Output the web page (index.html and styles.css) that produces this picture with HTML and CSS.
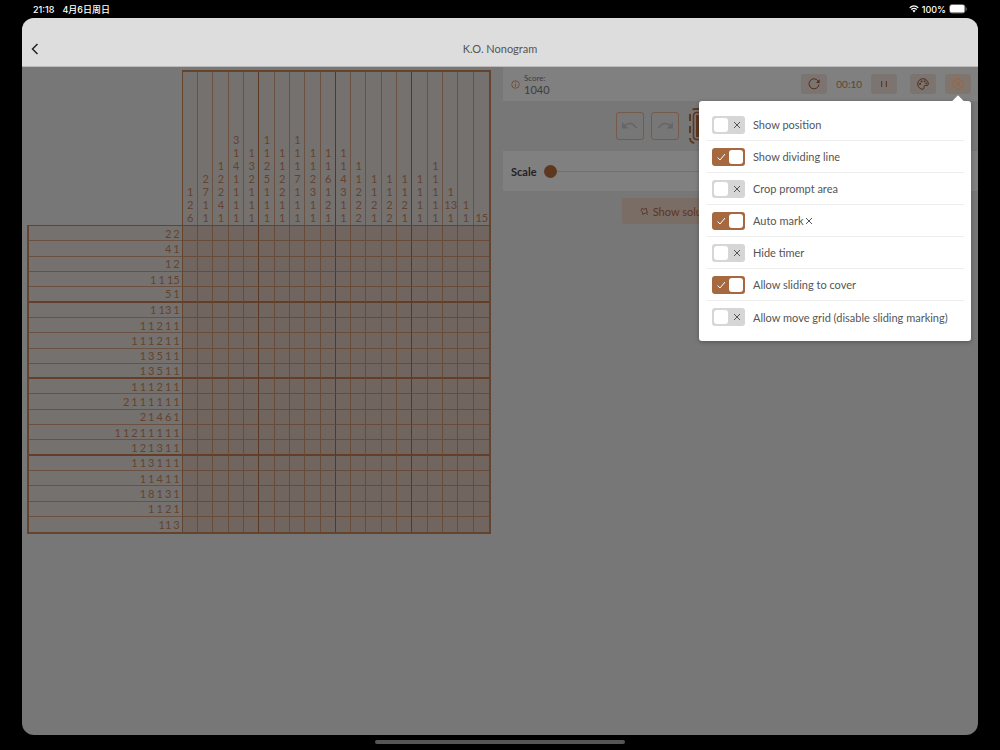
FILE: index.html
```html
<!DOCTYPE html>
<html lang="en">
	<head>
		<meta charset="UTF-8" />
		<meta name="viewport" content="width=device-width, initial-scale=1.0" />
		<title>K.O. Nonogram</title>
		<link rel="stylesheet" href="styles.css">
	</head>
	<body>
		<svg class="symbols" aria-hidden="true">
			<symbol id="check" viewBox="0 0 10 10"><path d="M1.5 5.5 4 8l5-6" /></symbol>
			<symbol id="cross" viewBox="0 0 10 10"><path d="m2 2 6 6M8 2 2 8" /></symbol>
		</svg>

		<div class="status">
			<span>21:18</span>
			<span class="date" lang="zh">4月6日周日</span>
			<span class="status-right">
				<svg class="wifi" viewBox="0 0 20 16"><path d="M1.500 5.500Q10-2 18.500 5.500M4.500 9Q10 4.200 15.500 9" /><path class="dot" d="M6.800 11.300Q10 8.600 13.200 11.300L10 15z" /></svg>
				<span>100%</span>
				<svg class="battery" viewBox="0 0 18 10"><rect x=".5" y=".5" width="15.500" height="8.500" rx="2.500" /><rect class="charge" x="1" y="1" width="14.500" height="7.500" rx="1.500" /><path d="M17.300 3.500v3" /></svg>
			</span>
		</div>

		<div class="window">
			<header class="titlebar">
				<button class="back" type="button" aria-label="Back">
					<svg viewBox="0 0 12 12"><path d="M8.500 1 3.500 6l5 5" /></svg>
				</button>
				<h1>K.O. Nonogram</h1>
			</header>

			<main class="game">
				<section class="board" aria-label="Puzzle">
					<div class="col-clues" id="colClues"></div>
					<div class="row-clues" id="rowClues"></div>
					<div class="cells" id="cells"></div>
				</section>

				<section class="panel">
					<div class="card info">
						<svg class="icon-info" viewBox="0 0 10 10"><circle cx="5" cy="5" r="4.200" /><path d="M5 4.500v3M5 2.500v1" /></svg>
						<div class="score">
							<span class="score-label">Score:</span>
							<span class="score-value">1040</span>
						</div>
						<div class="controls">
							<button class="chip" type="button" aria-label="Restart">
								<svg viewBox="0 0 14 14"><path d="M11.300 4.200A5 5 0 1 0 12 7.500" /><path class="fill" d="M12.600 2.300v3.700H9z" /></svg>
							</button>
							<span class="timer">00:10</span>
							<button class="chip pause" type="button" aria-label="Pause">
								<svg viewBox="0 0 14 14"><path d="M4.700 4v6M9.300 4v6" /></svg>
							</button>
							<button class="chip" type="button" aria-label="Theme">
								<svg viewBox="0 0 14 14"><path d="M7 12.300A5.300 5.300 0 1 1 12.300 7C12.300 9 10.500 8.500 9 8.500 6.800 8.500 9 12.200 7 12.300z" /><path class="fill" d="M3.200 6h1.800v1.800H3.200zM4.600 3.500h1.800v1.800H4.600zM7.800 3.500h1.800v1.800H7.800zM9.500 5.800h1.500v1.500H9.500z" /></svg>
							</button>
							<div class="settings">
								<button class="chip active" type="button" aria-label="Settings" aria-expanded="true">
									<svg viewBox="0 0 14 14"><path d="M5.300 1.800h3.400l.7 1.400 1.600.2 1.500 2.600-.8 1 .8 1.200-1.500 2.500-1.600.2-.7 1.400H5.300l-.7-1.400-1.600-.2L1.500 8.200l.8-1.200-.8-1L3 3.400l1.600-.2z" /><circle cx="7" cy="7" r="1.500" /></svg>
								</button>
								<div class="popover">
									<label class="option">
										<span class="switch"><input type="checkbox"><svg class="on"><use href="#check" /></svg><svg class="off"><use href="#cross" /></svg></span>
										Show position
									</label>
									<label class="option">
										<span class="switch"><input type="checkbox" checked><svg class="on"><use href="#check" /></svg><svg class="off"><use href="#cross" /></svg></span>
										Show dividing line
									</label>
									<label class="option">
										<span class="switch"><input type="checkbox"><svg class="on"><use href="#check" /></svg><svg class="off"><use href="#cross" /></svg></span>
										Crop prompt area
									</label>
									<label class="option">
										<span class="switch"><input type="checkbox" checked><svg class="on"><use href="#check" /></svg><svg class="off"><use href="#cross" /></svg></span>
										<span class="mark">Auto mark<svg><use href="#cross" /></svg></span>
									</label>
									<label class="option">
										<span class="switch"><input type="checkbox"><svg class="on"><use href="#check" /></svg><svg class="off"><use href="#cross" /></svg></span>
										Hide timer
									</label>
									<label class="option">
										<span class="switch"><input type="checkbox" checked><svg class="on"><use href="#check" /></svg><svg class="off"><use href="#cross" /></svg></span>
										Allow sliding to cover
									</label>
									<label class="option">
										<span class="switch"><input type="checkbox"><svg class="on"><use href="#check" /></svg><svg class="off"><use href="#cross" /></svg></span>
										Allow move grid (disable sliding marking)
									</label>
								</div>
							</div>
						</div>
					</div>

					<div class="tools">
						<button class="tool" type="button" aria-label="Undo">
							<svg viewBox="0 0 18 14"><path d="M3 7Q10 1 15.500 9" /><path class="fill" d="M1 3v6.500h6.500z" /></svg>
						</button>
						<button class="tool" type="button" aria-label="Redo">
							<svg viewBox="0 0 18 14"><path d="M15 7Q8 1 2.500 9" /><path class="fill" d="M17 3v6.500h-6.500z" /></svg>
						</button>
						<button class="tool fill-tool" type="button" aria-label="Fill cell">
							<svg viewBox="0 0 36 36"><rect class="dash" x="2" y="1" width="32" height="34" rx="5" /><rect x="5.500" y="4.500" width="25" height="27" rx="3" /><rect class="fill" x="8" y="7" width="20" height="22" /></svg>
						</button>
						<button class="tool" type="button" aria-label="Mark cell">
							<svg viewBox="0 0 10 10"><use href="#cross" /></svg>
						</button>
						<button class="tool" type="button" aria-label="Confirm">
							<svg viewBox="0 0 10 10"><use href="#check" /></svg>
						</button>
						<button class="tool" type="button" aria-label="Zoom out">
							<svg viewBox="0 0 10 10"><path d="M2 5h6" /></svg>
						</button>
						<button class="tool" type="button" aria-label="Zoom in">
							<svg viewBox="0 0 10 10"><path d="M2 5h6M5 2v6" /></svg>
						</button>
					</div>

					<div class="card scale">
						<label for="scale">Scale</label>
						<input type="range" id="scale" min="0" max="100" value="0">
					</div>

					<button class="solution" type="button">
						<svg viewBox="0 0 10 10"><path d="M2 1.500 4 2.500 7 1.500 7.500 4.500 8.500 6 6 7 3 8 2.500 5.500 1.200 4zM7 7l2 2" /></svg>
						Show solution
					</button>
				</section>
			</main>
		</div>
		<div class="home"></div>

		<script src="board.js"></script>
	</body>
</html>
```
FILE: styles.css
```css
* {
	box-sizing: border-box;
}
body {
	display: flex;
	flex-direction: column;
	min-height: 100vh;
	margin: 0;
	background-color: #000;
	color: #555;
	font-family: Lato, "Noto Sans CJK SC", sans-serif;
	font-size: 11px;
}
button {
	padding: 0;
	border: none;
	background: none;
	font: inherit;
	color: inherit;
	cursor: pointer;
}
svg {
	display: block;
	fill: none;
	stroke: currentColor;
}
svg .fill {
	fill: currentColor;
	stroke: none;
}
.symbols {
	position: absolute;
	width: 0;
	height: 0;
}

/* status bar */
.status {
	display: flex;
	align-items: center;
	gap: 8px;
	height: 18px;
	padding: 0 33px;
	color: #fff;
	font-family: Inter, "Noto Sans CJK SC", sans-serif;
	font-size: 9px;
	font-weight: 500;
}
.status-right {
	display: flex;
	align-items: center;
	gap: 3px;
	margin-left: auto;
}
.wifi {
	width: 10px;
	height: 8px;
	stroke-width: 2.5;
}
.wifi .dot {
	fill: #fff;
	stroke: none;
}
.battery {
	width: 18px;
	height: 10px;
	stroke: #666;
}
.battery .charge {
	fill: #fff;
	stroke: none;
}

/* window */
.window {
	flex: 1;
	display: flex;
	flex-direction: column;
	margin: 0 22px;
	border-radius: 12px;
	overflow: hidden;
	background-color: #777;
}
.titlebar {
	display: flex;
	align-items: center;
	height: 49px;
	padding: 13px 7px 0;
	background-color: #ddd;
	border-bottom: 1px solid #bbb;
}
.titlebar h1 {
	flex: 1;
	margin: 0 12px 0 0;
	font-size: 11px;
	font-weight: 400;
	text-align: center;
}
.back {
	color: #222;
}
.back svg {
	width: 12px;
	height: 12px;
	stroke-width: 1.5;
}
.game {
	display: flex;
	align-items: flex-start;
	gap: 12px;
	padding-left: 5px;
}

/* board */
.board {
	flex: 0 0 464px;
	display: grid;
	grid-template-columns: 1fr 2fr;
	margin-top: 3px;
	color: #64432f;
	font-size: 11px;
	line-height: 13px;
}
.col-clues {
	grid-column: 2;
	display: grid;
	grid-template-columns: repeat(20, 1fr);
	height: 155px;
	border: 2px solid #64432f;
	border-width: 2px 2px 0 1px;
	background-color: #75716e;
}
.row-clues {
	display: grid;
	grid-template-rows: repeat(20, 1fr);
	border: 1px solid #64432f;
	border-width: 1px 0 2px 2px;
	background-color: #75716e;
}
.clue {
	display: flex;
	min-width: 0;
	justify-content: flex-end;
}
.col-clues .clue {
	flex-direction: column;
	align-items: center;
	padding: 0 0 1px 1px;
	border-right: 1px solid #6a5142;
}
.row-clues .clue {
	align-items: center;
	gap: 2px;
	padding-right: 2px;
	border-bottom: 1px solid #6a5142;
}
.cells {
	display: grid;
	grid-template-columns: repeat(20, 1fr);
	grid-template-rows: repeat(20, 1fr);
	aspect-ratio: 1;
	border: 1px solid #64432f;
	border-width: 1px 2px 2px 1px;
	background-color: #70665f;
}
.cell {
	border-right: 1px solid #694b3a;
	border-bottom: 1px solid #694b3a;
}
.cell:nth-child(5n),
.col-clues .clue:nth-child(5n) {
	border-right-color: #5a3722;
}
.cell.divider,
.row-clues .clue:nth-child(5n) {
	border-bottom: 2px solid #643e28;
}
.cell:nth-child(20n),
.col-clues .clue:last-child {
	border-right: none;
}
.cell:nth-last-child(-n + 20),
.row-clues .clue:last-child {
	border-bottom: none;
}

/* right panel */
.panel {
	flex: 1;
	display: flex;
	flex-direction: column;
}
.card {
	display: flex;
	align-items: center;
	padding: 0 8px;
	background-color: #808080;
}
.info {
	height: 34px;
	color: #3d3d3d;
}
.icon-info {
	width: 9px;
	height: 9px;
	margin-right: 4px;
	color: #754b30;
}
.score {
	display: flex;
	flex-direction: column;
}
.score-label {
	font-size: 8px;
	line-height: 10px;
}
.score-value {
	line-height: 13px;
}
.controls {
	display: flex;
	align-items: center;
	gap: 9px;
	margin-left: auto;
}
.chip {
	display: grid;
	place-items: center;
	width: 26px;
	height: 20px;
	border-radius: 3px;
	background-color: #7b7470;
	color: #532f1b;
}
.chip svg {
	width: 14px;
	height: 14px;
}
.pause {
	margin-right: 4px;
}
.active {
	background-color: #80756c;
	color: #a0633b;
}
.timer {
	color: #64432f;
	font-size: 10px;
}
.settings {
	position: relative;
	margin-right: -1px;
}
.tools {
	display: flex;
	align-items: center;
	justify-content: center;
	gap: 7px;
	height: 50px;
}
.tool {
	display: grid;
	place-items: center;
	width: 28px;
	height: 28px;
	border: 1px solid #765b4b;
	border-radius: 3px;
	color: #666;
}
.tool svg {
	width: 18px;
	height: 14px;
	stroke-width: 1.5;
}
.fill-tool {
	width: 36px;
	height: 36px;
	margin: 0 2px;
	border: none;
	color: #5e371f;
}
.fill-tool svg {
	width: 36px;
	height: 36px;
}
.fill-tool .dash {
	stroke-width: 2;
	stroke-dasharray: 7 5;
}
.scale {
	height: 40px;
	gap: 7px;
	color: #222;
	font-weight: 700;
}
.scale input {
	flex: 1;
	height: 14px;
	margin: 0;
	appearance: none;
	background: linear-gradient(#707070, #707070) center / 100% 1px no-repeat;
}
.scale input::-webkit-slider-thumb {
	appearance: none;
	width: 13px;
	height: 13px;
	border-radius: 50%;
	background-color: #5e371f;
}
.solution {
	display: flex;
	align-items: center;
	align-self: center;
	gap: 4px;
	width: 50%;
	height: 26px;
	margin-top: 7px;
	padding: 0 18px;
	border-radius: 3px;
	background-color: #7a6d66;
	color: #5a3722;
}
.solution svg {
	width: 9px;
	height: 9px;
}

/* settings popover */
.popover {
	position: absolute;
	z-index: 1;
	top: 27px;
	right: 0;
	width: 272px;
	padding: 8px 7px;
	border-radius: 3px;
	background-color: #fff;
	box-shadow: 0 1px 4px rgba(0, 0, 0, 0.3);
	color: #555;
}
.popover::before {
	content: "";
	position: absolute;
	top: -4px;
	right: 9px;
	width: 8px;
	height: 8px;
	background-color: #fff;
	transform: rotate(45deg);
}
.option {
	display: flex;
	align-items: center;
	gap: 8px;
	height: 32px;
	padding: 0 6px;
	border-bottom: 1px solid #eee;
	white-space: nowrap;
}
.option:last-child {
	border-bottom: none;
}
.mark {
	display: flex;
	align-items: center;
}
.mark svg {
	width: 10px;
	height: 10px;
}
.switch {
	position: relative;
	display: block;
	width: 33px;
	height: 18px;
}
.switch input {
	display: block;
	width: 100%;
	height: 100%;
	margin: 0;
	padding: 2px;
	border-radius: 3px;
	appearance: none;
	background-color: #d6d6d6;
}
.switch input::before {
	content: "";
	display: block;
	width: 14px;
	height: 14px;
	border-radius: 3px;
	background-color: #fff;
}
.switch input:checked {
	background-color: #a6683f;
}
.switch input:checked::before {
	margin-left: auto;
}
.switch svg {
	position: absolute;
	top: 4px;
	width: 10px;
	height: 10px;
	pointer-events: none;
}
.switch .on {
	left: 4px;
	color: #fff;
	display: none;
}
.switch .off {
	right: 3px;
}
.switch input:checked ~ .on {
	display: block;
}
.switch input:checked ~ .off {
	display: none;
}

.home {
	flex: none;
	width: 25%;
	height: 4px;
	margin: 5px auto 6px;
	border-radius: 2px;
	background-color: #555;
}
```
FILE: board.js
```js
const size = 20;
const cols = [
	'1 2 6', '2 7 1 1', '1 2 2 4 1', '3 1 4 1 1 1 1', '1 3 2 1 1 1',
	'1 1 2 5 1 1 1', '1 1 2 2 1 1', '1 1 1 7 1 1 1', '1 1 2 3 1 1', '1 1 6 1 2 1',
	'1 1 4 3 1 1', '1 1 2 2 2', '1 1 2 1', '1 1 2 2', '1 1 2 1',
	'1 1 1 1', '1 1 1 1 1', '1 13 1', '1 1', '15',
];
const rows = [
	'2 2', '4 1', '1 2', '1 1 15', '5 1',
	'1 13 1', '1 1 2 1 1', '1 1 1 2 1 1', '1 3 5 1 1', '1 3 5 1 1',
	'1 1 1 2 1 1', '2 1 1 1 1 1 1', '2 1 4 6 1', '1 1 2 1 1 1 1 1', '1 2 1 3 1 1',
	'1 1 3 1 1 1', '1 1 4 1 1', '1 8 1 3 1', '1 1 2 1', '11 3',
];

function addClues(id, clues) {
	const parent = document.getElementById(id);
	clues.forEach((clue) => {
		const el = document.createElement('div');
		el.className = 'clue';
		clue.split(' ').forEach((n) => {
			const span = document.createElement('span');
			span.textContent = n;
			el.append(span);
		});
		parent.append(el);
	});
}

addClues('colClues', cols);
addClues('rowClues', rows);

const cells = document.getElementById('cells');
for (let i = 0; i < size * size; i++) {
	const cell = document.createElement('div');
	const row = Math.floor(i / size) + 1;
	cell.className = row % 5 === 0 ? 'cell divider' : 'cell';
	cells.append(cell);
}
```
